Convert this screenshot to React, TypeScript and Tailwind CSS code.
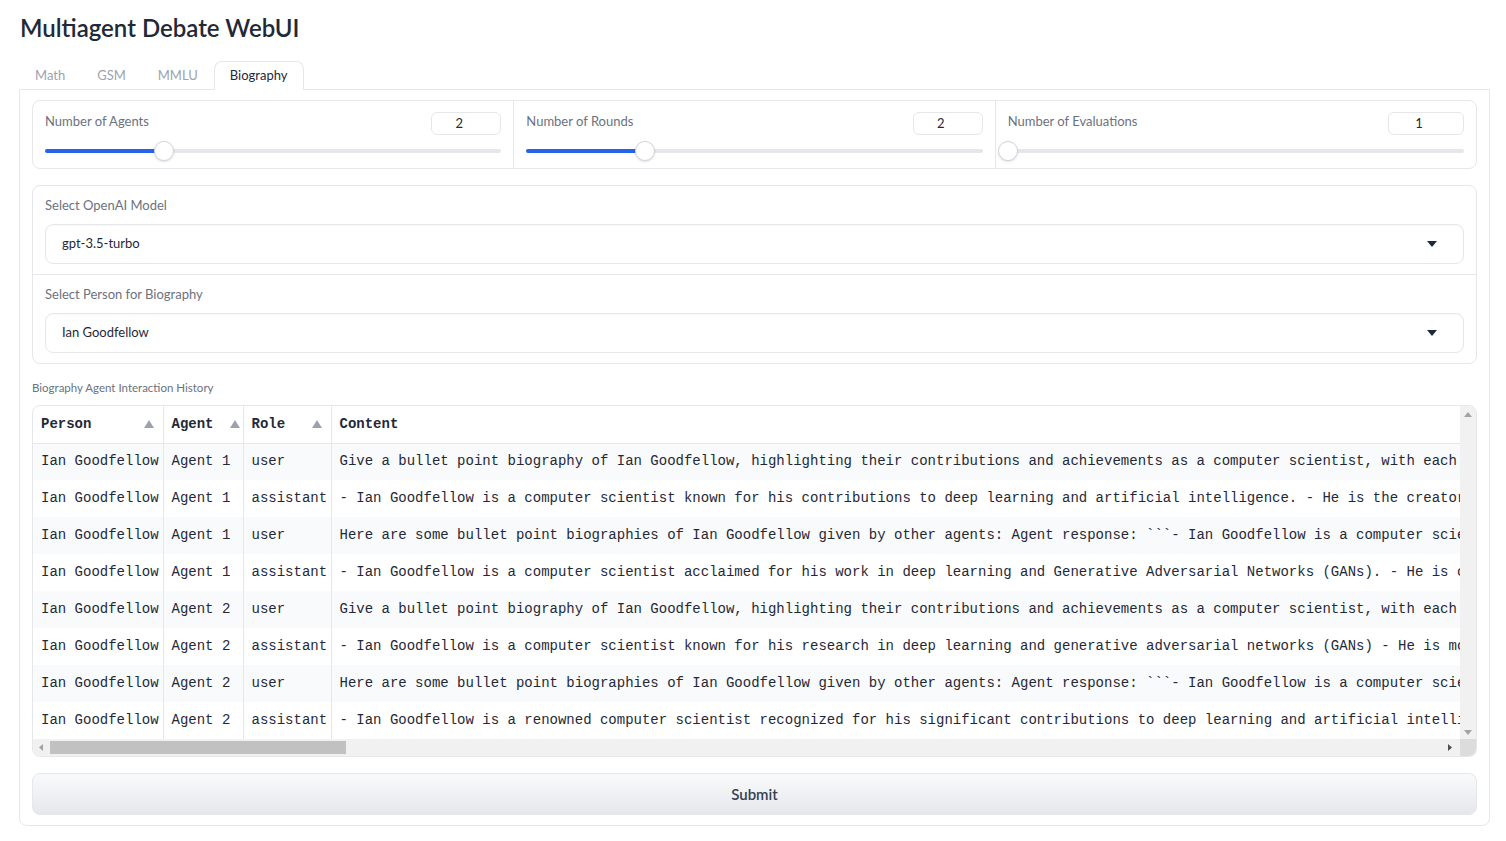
import { useState } from "react";

const rows = [
  ["Ian Goodfellow", "Agent 1", "user", "Give a bullet point biography of Ian Goodfellow, highlighting their contributions and achievements as a computer scientist, with each fact separated with a new line character."],
  ["Ian Goodfellow", "Agent 1", "assistant", "- Ian Goodfellow is a computer scientist known for his contributions to deep learning and artificial intelligence. - He is the creator of Generative Adversarial Networks (GANs)."],
  ["Ian Goodfellow", "Agent 1", "user", "Here are some bullet point biographies of Ian Goodfellow given by other agents: Agent response: ```- Ian Goodfellow is a computer scientist known for his research"],
  ["Ian Goodfellow", "Agent 1", "assistant", "- Ian Goodfellow is a computer scientist acclaimed for his work in deep learning and Generative Adversarial Networks (GANs). - He is credited with inventing GANs in 2014."],
  ["Ian Goodfellow", "Agent 2", "user", "Give a bullet point biography of Ian Goodfellow, highlighting their contributions and achievements as a computer scientist, with each fact separated with a new line character."],
  ["Ian Goodfellow", "Agent 2", "assistant", "- Ian Goodfellow is a computer scientist known for his research in deep learning and generative adversarial networks (GANs) - He is most famous for inventing GANs."],
  ["Ian Goodfellow", "Agent 2", "user", "Here are some bullet point biographies of Ian Goodfellow given by other agents: Agent response: ```- Ian Goodfellow is a computer scientist acclaimed for his work"],
  ["Ian Goodfellow", "Agent 2", "assistant", "- Ian Goodfellow is a renowned computer scientist recognized for his significant contributions to deep learning and artificial intelligence."],
];

const cols: [string, number, string][] = [
  ["Person", 130, "pr-[9px]"],
  ["Agent", 80, "pr-[3px]"],
  ["Role", 88, "pr-[9px]"],
];

function SortUp() {
  return (
    <svg width="10" height="8" viewBox="0 0 10 8"><path d="M5 0l5 8H0z" fill="#9ca3af" /></svg>
  );
}

function SliderBox({ label, value, pct, last }: { label: string; value: string; pct: number; last?: boolean }) {
  return (
    <div className={`flex-1 px-3 pt-[12px] pb-[15px] ${last ? "" : "border-r border-[#e5e7eb]"}`}>
      <div className="flex items-start justify-between">
        <span className="text-[13px] leading-[16px] text-[#6b7280]">{label}</span>
        <div className={`${last ? "w-[76px]" : "w-[70px]"} h-[23px] -mt-[1px] rounded-md border border-[#e5e7eb] flex items-center justify-center pr-[14px] text-[13px] text-[#1f2937]`}>
          {value}
        </div>
      </div>
      <div className="relative mt-[14px] h-[4px] rounded-full bg-[#e5e7eb]">
        <div className="h-[4px] rounded-full bg-[#2563eb]" style={{ width: `${pct}%` }} />
        <div
          className="absolute top-[-8px] w-[20px] h-[20px] rounded-full bg-white border border-[#d1d5db] shadow-sm"
          style={{ left: `calc(${pct}% - 10px)` }}
        />
      </div>
    </div>
  );
}

function SelectBox({ label, value }: { label: string; value: string }) {
  return (
    <div className="px-3 pt-[10px] pb-[10px]">
      <div className="text-[13px] leading-[18px] text-[#6b7280] mb-[10px]">{label}</div>
      <div className="h-[40px] rounded-lg border border-[#e5e7eb] flex items-center justify-between pl-[16px] pr-[26px] text-[13px] text-[#1f2937] shadow-[inset_0_1px_2px_rgba(0,0,0,0.03)]">
        <span>{value}</span>
        <svg width="10" height="6" viewBox="0 0 10 6"><path d="M0 0h10L5 6z" fill="#1f2937" /></svg>
      </div>
    </div>
  );
}

export default function App() {
  const [tab, setTab] = useState("Biography");
  const tabs = ["Math", "GSM", "MMLU", "Biography"];

  return (
    <div className="min-h-screen bg-white pl-[19px] pr-[16px] pt-[12px] font-['Lato','Noto_Sans',sans-serif]">
      <h1 className="pl-[1px] text-[24px] leading-[32px] font-semibold text-[#1f2937] mb-[17px]">Multiagent Debate WebUI</h1>

      <div className="flex h-[29px] relative z-10">
        {tabs.map((t) => (
          <button
            key={t}
            onClick={() => setTab(t)}
            className={`px-[15px] text-[13px] h-[29px] rounded-t-lg ${
              tab === t ? "bg-white border border-b-0 border-[#e5e7eb] text-[#1f2937]" : "text-[#9ca3af] border border-transparent"
            }`}
          >
            {t}
          </button>
        ))}
      </div>

      <div className="-mt-[1px] border border-[#e5e7eb] rounded-b-lg px-[12px] pt-[10px] pb-[10px] flex flex-col gap-[16px]">
        <div className="flex rounded-lg border border-[#e5e7eb]">
          <SliderBox label="Number of Agents" value="2" pct={26} />
          <SliderBox label="Number of Rounds" value="2" pct={26} />
          <SliderBox label="Number of Evaluations" value="1" pct={0} last />
        </div>

        <div className="rounded-lg border border-[#e5e7eb]">
          <SelectBox label="Select OpenAI Model" value="gpt-3.5-turbo" />
          <div className="border-t border-[#e5e7eb]" />
          <SelectBox label="Select Person for Biography" value="Ian Goodfellow" />
        </div>

        <div>
          <div className="text-[11.5px] leading-[16px] text-[#6b7280] mb-[9px]">Biography Agent Interaction History</div>
          <div className="rounded-lg border border-[#e5e7eb] overflow-hidden font-['Liberation_Mono',monospace] text-[14px] text-[#1f2937]">
            <div className="flex">
              <div className="flex-1 overflow-hidden">
                <table className="border-collapse whitespace-nowrap table-fixed w-[2000px]">
                  <colgroup>
                    {cols.map(([h, w]) => (
                      <col key={h} style={{ width: w }} />
                    ))}
                    <col />
                  </colgroup>
                  <thead>
                    <tr className="h-[37px]">
                      {cols.map(([h, , pr]) => (
                        <th key={h} className={`border-r border-b border-[#e5e7eb] text-left font-bold pl-[8px] ${pr}`}>
                          <div className="flex items-center justify-between">
                            <span>{h}</span>
                            <SortUp />
                          </div>
                        </th>
                      ))}
                      <th className="border-b border-[#e5e7eb] text-left font-bold px-[8px]">Content</th>
                    </tr>
                  </thead>
                  <tbody>
                    {rows.map((r, i) => (
                      <tr key={i} className={`h-[37px] ${i % 2 === 0 ? "bg-[#f9fafb]" : "bg-white"}`}>
                        <td className="border-r border-[#e5e7eb] pl-[8px] overflow-hidden">{r[0]}</td>
                        <td className="border-r border-[#e5e7eb] pl-[8px] overflow-hidden">{r[1]}</td>
                        <td className="border-r border-[#e5e7eb] pl-[8px] overflow-hidden">{r[2]}</td>
                        <td className="pl-[8px] overflow-hidden">{r[3]}</td>
                      </tr>
                    ))}
                  </tbody>
                </table>
              </div>
              <div className="w-[16px] bg-[#f1f1f1] flex flex-col justify-between items-center pt-[6px] pb-[4px]">
                <svg width="8" height="5" viewBox="0 0 8 5"><path d="M4 0l4 5H0z" fill="#a3a3a3" /></svg>
                <svg width="8" height="5" viewBox="0 0 8 5"><path d="M0 0h8L4 5z" fill="#a3a3a3" /></svg>
              </div>
            </div>
            <div className="flex h-[17px]">
              <div className="flex-1 bg-[#f1f1f1] flex items-center pl-[6px] pr-[8px]">
                <svg width="4" height="7" viewBox="0 0 4 7"><path d="M4 0v7L0 3.5z" fill="#a3a3a3" /></svg>
                <div className="ml-[7px] h-[13px] w-[296px] bg-[#c1c1c1]" />
                <div className="flex-1" />
                <svg width="4" height="7" viewBox="0 0 4 7"><path d="M0 0v7l4-3.5z" fill="#505050" /></svg>
              </div>
              <div className="w-[16px] bg-[#dcdcdc]" />
            </div>
          </div>
        </div>

        <button className="h-[42px] rounded-lg border border-[#e5e7eb] bg-gradient-to-b from-[#f9fafb] to-[#e5e7eb] text-[15px] font-semibold text-[#374151]">
          Submit
        </button>
      </div>
    </div>
  );
}
